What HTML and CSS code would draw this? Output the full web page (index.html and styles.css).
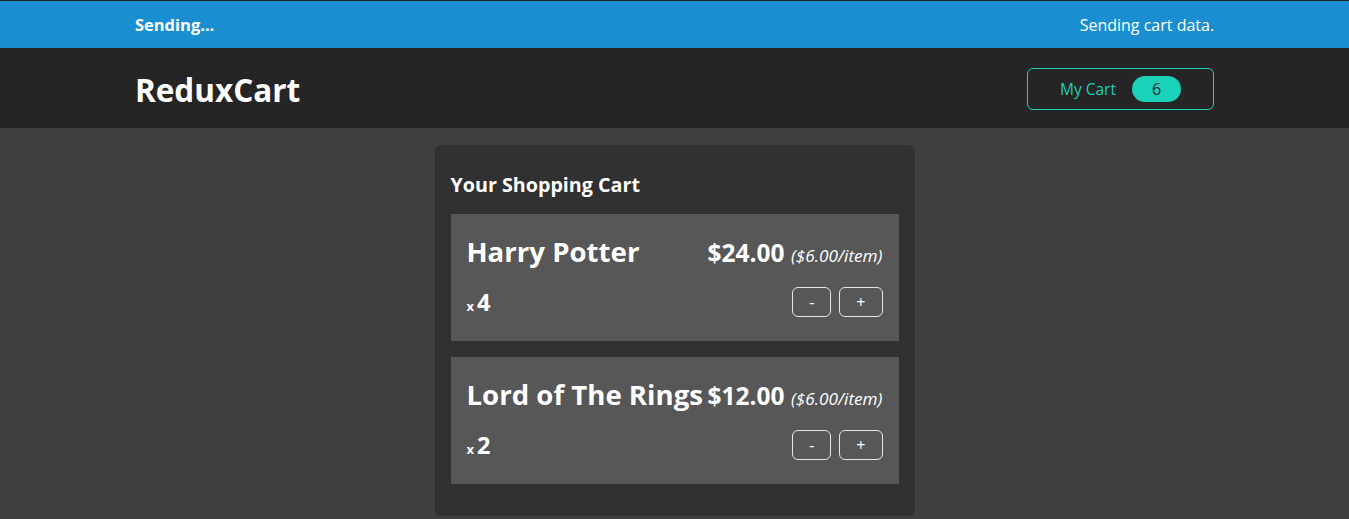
FILE: index.html
```html
<!DOCTYPE html>
<html lang="en">
<head>
<meta charset="utf-8">
<title>ReduxCart</title>
<link rel="stylesheet" href="styles.css">
</head>
<body>
  <section class="notification">
    <h2>Sending...</h2>
    <p>Sending cart data.</p>
  </section>
  <header class="header">
    <h1>ReduxCart</h1>
    <nav class="nav">
      <button class="cart-button">
        <span>My Cart</span>
        <span class="badge">6</span>
      </button>
    </nav>
  </header>
  <main>
    <section class="cart">
      <h2>Your Shopping Cart</h2>
      <ul>
        <li class="item">
          <header>
            <h3>Harry Potter</h3>
            <div class="price">$24.00 <span class="itemprice">($6.00/item)</span></div>
          </header>
          <div class="details">
            <div class="quantity">x<span>4</span></div>
            <div class="actions">
              <button>-</button>
              <button>+</button>
            </div>
          </div>
        </li>
        <li class="item">
          <header>
            <h3>Lord of The Rings</h3>
            <div class="price">$12.00 <span class="itemprice">($6.00/item)</span></div>
          </header>
          <div class="details">
            <div class="quantity">x<span>2</span></div>
            <div class="actions">
              <button>-</button>
              <button>+</button>
            </div>
          </div>
        </li>
      </ul>
    </section>
  </main>
</body>
</html>
```
FILE: styles.css
```css
* { box-sizing: border-box; }

body {
  margin: 0;
  background-color: #3f3f3f;
  font-family: "Open Sans", "Noto Sans", sans-serif;
  color: #ffffff;
}

.notification {
  height: 48px;
  border-top: 1px solid #222222;
  background-color: #1a8ed1;
  display: flex;
  justify-content: space-between;
  align-items: center;
  padding: 0 10%;
}

.notification h2 {
  margin: 0;
  font-size: 16.5px;
  font-weight: 700;
}

.notification p {
  margin: 0;
  font-size: 16px;
}

.header {
  height: 80px;
  background-color: #252525;
  display: flex;
  justify-content: space-between;
  align-items: center;
  padding: 0 10%;
}

.header h1 {
  margin: 3px 0 0;
  font-size: 31.5px;
  line-height: 40px;
  font-weight: 700;
}

.nav {
  margin-top: 2px;
}

.cart-button {
  display: flex;
  align-items: center;
  background: transparent;
  border: 1px solid #1ad1b9;
  border-radius: 6px;
  color: #1ad1b9;
  font-family: inherit;
  font-size: 15.5px;
  line-height: 20px;
  padding: 7px 32px;
  cursor: pointer;
}

.badge {
  margin-left: 16px;
  background-color: #1ad1b9;
  color: #1d1d1d;
  border-radius: 30px;
  padding: 3px 20px;
  font-size: 16px;
  line-height: 20px;
}

main {
  padding-top: 17px;
}

.cart {
  max-width: 480px;
  margin: 0 auto;
  background-color: #313131;
  border-radius: 6px;
  padding: 16px;
}

.cart h2 {
  margin: 12px 0 17px;
  font-size: 19.7px;
  line-height: 24px;
  font-weight: 700;
}

.cart ul {
  list-style: none;
  margin: 0;
  padding: 0;
}

.item {
  margin: 16px 0;
  background-color: #575757;
  padding: 16px;
}

.item header {
  display: flex;
  justify-content: space-between;
  align-items: baseline;
  margin-bottom: 6px;
}

.item h3 {
  margin: 0;
  font-size: 27.6px;
  line-height: 43px;
  font-weight: 700;
  white-space: nowrap;
}

.price {
  font-size: 24.5px;
  font-weight: 700;
  white-space: nowrap;
}

.itemprice {
  font-size: 17.2px;
  font-weight: 400;
  font-style: italic;
}

.details {
  display: flex;
  justify-content: space-between;
  align-items: center;
}

.quantity {
  font-size: 13px;
  font-weight: 700;
}

.quantity span {
  margin-left: 3px;
  font-size: 23.5px;
}

.actions {
  display: flex;
  gap: 8px;
  margin: 8px 0;
}

.actions button {
  background: transparent;
  border: 1px solid #e6e6e6;
  border-radius: 6px;
  color: #ffffff;
  font-family: inherit;
  font-size: 16px;
  line-height: 20px;
  padding: 4px 16px;
  cursor: pointer;
}
```
